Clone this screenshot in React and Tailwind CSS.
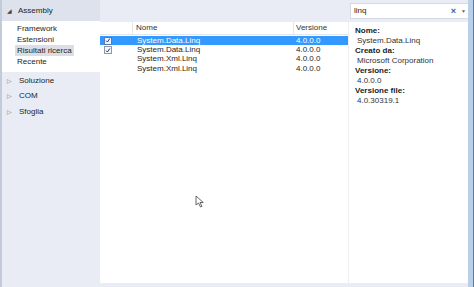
import React from 'react';

const rows = [
  { name: 'System.Data.Linq', version: '4.0.0.0', checked: true, selected: true },
  { name: 'System.Data.Linq', version: '4.0.0.0', checked: true },
  { name: 'System.Xml.Linq', version: '4.0.0.0' },
  { name: 'System.Xml.Linq', version: '4.0.0.0' },
];

const details = [
  ['Nome:', 'System.Data.Linq'],
  ['Creato da:', 'Microsoft Corporation'],
  ['Versione:', '4.0.0.0'],
  ['Versione file:', '4.0.30319.1'],
];

function Check({ dark }) {
  return (
    <div className={`w-[8px] h-[8px] border flex items-center justify-center ${dark ? 'border-[#5a7bb0] bg-[#eef3fb]' : 'border-[#8b98ad] bg-[#f4f6fa]'}`}>
      <svg viewBox="0 0 8 8" className="w-[7px] h-[7px]">
        <path d="M1.5 4.2 L3.2 6 L6.5 1.3" fill="none" stroke="#1f3a6e" strokeWidth="1.3" />
      </svg>
    </div>
  );
}

export default function App() {
  return (
    <div
      className="relative w-[474px] h-[287px] flex bg-[#e9ecf5] border-l-2 border-[#c3cad9] text-[8px] leading-none text-[#1e1e1e] overflow-hidden"
      style={{ fontFamily: '"Liberation Sans", Arial, sans-serif' }}
    >
      {/* left navigation */}
      <div className="w-[98px] flex flex-col shrink-0">
        <div className="h-[21px] bg-[#dde2ec] flex items-center pl-[5px] gap-[6px]">
          <span className="text-[6px] text-[#444]">◢</span>
          <span>Assembly</span>
        </div>
        <div className="h-[51px] bg-white flex flex-col pt-[2px] pl-[13px]">
          <div className="h-[11px] flex items-center px-[2px]">Framework</div>
          <div className="h-[11px] flex items-center px-[2px]">Estensioni</div>
          <div className="h-[11px] flex items-center px-[2px] bg-[#dcdee6] w-fit">Risultati ricerca</div>
          <div className="h-[11px] flex items-center px-[2px]">Recente</div>
        </div>
        <div className="flex flex-col pt-[1px]">
          {['Soluzione', 'COM', 'Sfoglia'].map((t) => (
            <div key={t} className="h-[15.5px] flex items-center pl-[5px] gap-[7px]">
              <span className="text-[6px] text-[#777]">▷</span>
              <span>{t}</span>
            </div>
          ))}
        </div>
      </div>

      {/* main */}
      <div className="flex-1 flex flex-col">
        <div className="h-[22px] flex items-center justify-end pr-[4px] shrink-0">
          <div className="w-[120px] h-[16px] bg-white border border-[#d5dae6] flex items-center pl-[3px] pr-[3px]">
            <span className="flex-1">linq</span>
            <span className="text-[#2a62b8] text-[9px] font-bold mr-[5px]">×</span>
            <span className="text-[5px] text-[#666]">▼</span>
          </div>
        </div>
        <div className="flex-1 flex pr-[4px]">
          {/* list */}
          <div className="w-[249px] bg-white flex flex-col border-r border-[#eceef2]">
            <div className="h-[13px] flex border-b border-[#e3e6ec] text-[#333]">
              <div className="w-[33px] border-r border-[#e3e6ec]"></div>
              <div className="w-[161px] border-r border-[#e3e6ec] flex items-center pl-[3px]">Nome</div>
              <div className="flex-1 flex items-center pl-[2px]">Versione</div>
            </div>
            <div className="flex flex-col pt-[1px]">
              {rows.map((r, i) => (
                <div
                  key={i}
                  className={`h-[9.4px] flex items-center ${r.selected ? 'bg-[#3399ff] text-white' : ''}`}
                >
                  <div className="w-[33px] pl-[4px] flex items-center">{r.checked && <Check dark={r.selected} />}</div>
                  <div className="w-[161px] pl-[4px]">{r.name}</div>
                  <div className="flex-1 pl-[2px]">{r.version}</div>
                </div>
              ))}
            </div>
          </div>
          {/* details */}
          <div className="flex-1 bg-white flex flex-col pl-[6px] pt-[4px]">
            {details.map(([k, v]) => (
              <div key={k} className="flex flex-col">
                <div className="h-[10px] flex items-center font-bold text-[#222]">{k}</div>
                <div className="h-[10px] flex items-center pl-[2px] text-[#333]">{v}</div>
              </div>
            ))}
          </div>
        </div>
        <div className="h-[4px] shrink-0"></div>
      </div>

      {/* window right edge */}
      <div className="absolute right-0 top-0 h-full w-[6px] flex">
        <div className="w-[5px] bg-[#b9d0e8]"></div>
        <div className="w-[1px] bg-[#5d7a9c]"></div>
      </div>

      {/* mouse cursor */}
      <svg className="absolute left-[193px] top-[195px]" width="10" height="13" viewBox="0 0 10 13">
        <path d="M1 1 L1 10 L3.5 8 L5.5 12 L7 11.3 L5 7.5 L8.3 7.5 Z" fill="white" stroke="#555" strokeWidth="0.9" />
      </svg>
    </div>
  );
}
